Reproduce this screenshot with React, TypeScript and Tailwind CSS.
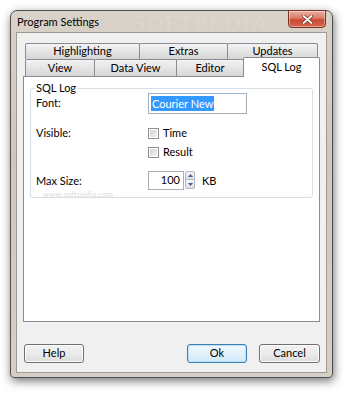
import { ReactNode } from 'react';

// Win7-style "Program Settings" dialog
const Tab = ({ label, w, first, selected }: { label: string; w: string; first?: boolean; selected?: boolean }) => (
    <div
        className={`${w} ${first ? '' : '-ml-px'} ${
            selected
                ? 'relative z-10 -mt-[2px] h-[20px] bg-white'
                : 'h-full bg-[linear-gradient(#f3f3f3,#e3e3e3_55%,#d6d6d6)]'
        } flex items-center justify-center border border-b-0 border-[#898c95] rounded-t-[2px] text-[11px] text-black`}
    >
        {label}
    </div>
);

const Checkbox = ({ label }: { label: string }) => (
    <div className="flex items-center gap-[4px] h-[12px]">
        <div className="w-[11px] h-[11px] border border-[#8e8f8f] bg-white p-[1px]">
            <div className="w-full h-full bg-[linear-gradient(135deg,#cfd1d3,#f4f4f4)]" />
        </div>
        <span className="text-[11px] text-black">{label}</span>
    </div>
);

const Button = ({ children, w, primary }: { children: ReactNode; w: string; primary?: boolean }) => (
    <div
        className={`${w} h-[19px] flex items-center justify-center rounded-[3px] border text-[11px] text-black ${
            primary
                ? 'border-[#3c7fb1] bg-[linear-gradient(#f2f9fd,#e1f1fb_50%,#d0e9f8)] shadow-[inset_0_0_0_1px_#b9e0f6]'
                : 'border-[#707070] bg-[linear-gradient(#f2f2f2,#ebebeb_50%,#dcdcdc)] shadow-[inset_0_0_0_1px_#fcfcfc]'
        }`}
    >
        {children}
    </div>
);

export default function App() {
    return (
        <div className="w-[350px] h-[395px] bg-white pt-[10px] pl-[10px] font-['Lato',sans-serif]">
            <div className="relative w-[323px] h-[368px] flex flex-col rounded-t-[7px] rounded-b-[4px] border border-[#4f4f4f] bg-[linear-gradient(#d9d2c9,#cfc7bd_40%,#d6cfc6)] shadow-[1px_3px_10px_rgba(0,0,0,0.55)]">
                {/* title bar */}
                <div className="relative h-[21px] flex items-start justify-between pl-[6px] pr-[6px]">
                    <span className="mt-[5px] text-[11px] leading-[12px] text-black">Program Settings</span>
                    <span className="absolute left-[122px] top-[1px] font-['Liberation_Serif',serif] text-[22px] leading-[22px] tracking-[2px] text-[#e2dbd2] opacity-50">
                        SOFTPEDIA
                    </span>
                    <div className="-mt-px w-[38px] h-[18px] flex items-center justify-center rounded-b-[4px] border border-[#7a3126] bg-[linear-gradient(#ecb0a3,#dc7a67_45%,#c94a33_55%,#d9654c)] shadow-[inset_0_0_0_1px_rgba(255,255,255,0.4)]">
                        <svg width="11" height="9" viewBox="0 0 11 9">
                            <path d="M1.5 1 L9.5 8 M9.5 1 L1.5 8" stroke="#6a2218" strokeWidth="3" strokeLinecap="round" />
                            <path d="M1.5 1 L9.5 8 M9.5 1 L1.5 8" stroke="#ffffff" strokeWidth="1.8" strokeLinecap="round" />
                        </svg>
                    </div>
                </div>

                {/* client area */}
                <div className="mx-[5px] h-[341px] flex flex-col bg-[#f0f0f0] border border-[#a09a92] pt-[10px] px-[6px] pb-[9px]">
                    {/* tabs */}
                    <div className="flex flex-col ml-[2px]">
                        <div className="flex h-[16px]">
                            <Tab label="Highlighting" w="w-[115px]" first />
                            <Tab label="Extras" w="w-[89px]" />
                            <Tab label="Updates" w="w-[91px]" />
                        </div>
                        <div className="flex h-[17px] items-start">
                            <Tab label="View" w="w-[70px]" first />
                            <Tab label="Data View" w="w-[83px]" />
                            <Tab label="Editor" w="w-[68px]" />
                            <Tab label="SQL Log" w="w-[77px]" selected />
                        </div>
                    </div>

                    {/* tab page */}
                    <div className="relative h-[247px] bg-white border border-[#898c95] pt-[11px] px-[6px]">
                        <div className="relative border border-[#d5dfe5] rounded-[3px] pt-[4px] pl-[5px] pb-[7px]">
                            <span className="absolute -top-[8px] left-[4px] bg-white px-[1px] text-[11px] leading-[14px] text-black">
                                SQL Log
                            </span>
                            <div className="flex items-center h-[21px]">
                                <span className="w-[112px] text-[11px] text-black">Font:</span>
                                <div className="w-[99px] h-[21px] flex items-center border border-[#abadb3] border-t-[#9bb6d3] bg-white pl-[2px]">
                                    <span className="bg-[#3399ff] text-white text-[11px] leading-[15px] px-[1px]">Courier New</span>
                                </div>
                            </div>
                            <div className="flex mt-[13px]">
                                <span className="w-[112px] text-[11px] leading-[12px] text-black">Visible:</span>
                                <div className="flex flex-col gap-[7px]">
                                    <Checkbox label="Time" />
                                    <Checkbox label="Result" />
                                </div>
                            </div>
                            <div className="flex items-center mt-[13px] h-[19px]">
                                <span className="w-[112px] text-[11px] text-black pt-[2px]">Max Size:</span>
                                <div className="w-[36px] h-[19px] flex items-center justify-end border border-[#abadb3] bg-white pr-[3px] text-[11px] text-black">
                                    100
                                </div>
                                <div className="ml-px flex flex-col w-[10px] h-[19px]">
                                    <div className="h-[9px] flex items-center justify-center border border-[#b2b7c0] rounded-t-[2px] bg-[linear-gradient(#f4f6f8,#dde2e8)]">
                                        <svg width="5" height="3" viewBox="0 0 5 3">
                                            <path d="M0 3 L2.5 0 L5 3 Z" fill="#4d6185" />
                                        </svg>
                                    </div>
                                    <div className="h-[10px] -mt-px flex items-center justify-center border border-[#b2b7c0] rounded-b-[2px] bg-[linear-gradient(#f4f6f8,#dde2e8)]">
                                        <svg width="5" height="3" viewBox="0 0 5 3">
                                            <path d="M0 0 L5 0 L2.5 3 Z" fill="#4d6185" />
                                        </svg>
                                    </div>
                                </div>
                                <span className="ml-[7px] text-[11px] text-black pt-[2px]">KB</span>
                            </div>
                            {/* watermark */}
                            <span className="absolute left-[12px] top-[101px] text-[8px] leading-[9px] text-[#dcdcdc]">
                                www.softpedia.com
                            </span>
                        </div>
                    </div>

                    {/* buttons */}
                    <div className="mt-[22px] flex items-center pl-[1px]">
                        <Button w="w-[60px]">Help</Button>
                        <div className="flex-1" />
                        <Button w="w-[60px]" primary>
                            Ok
                        </Button>
                        <div className="w-[12px]" />
                        <Button w="w-[61px]">Cancel</Button>
                    </div>
                </div>
            </div>
        </div>
    );
}
